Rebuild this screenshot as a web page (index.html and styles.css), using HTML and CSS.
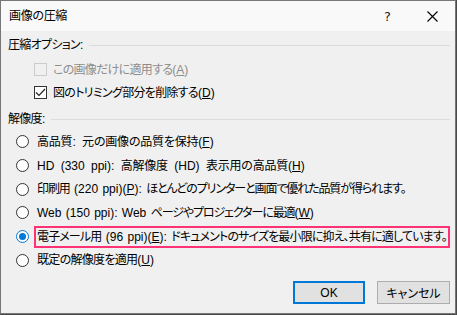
FILE: index.html
```html
<!DOCTYPE html>
<html lang="ja">
<head>
<meta charset="utf-8">
<title>画像の圧縮</title>
<link rel="stylesheet" href="styles.css">
</head>
<body>
<div class="window">
  <div class="titlebar">
    <span class="title">画像の圧縮</span>
    <span class="tb-btn help">?</span>
    <span class="tb-btn close">
      <svg width="11" height="11" viewBox="0 0 11 11"><path d="M0.5 0.5 L10.5 10.5 M10.5 0.5 L0.5 10.5" stroke="#000" stroke-width="1.1" fill="none"/></svg>
    </span>
  </div>
  <div class="content">
    <div class="group-head"><span>圧縮オプション<span class="lat">:</span></span><span class="rule"></span></div>
    <div class="checks">
      <div class="check-row disabled">
        <span class="box"></span>
        <span class="label">この画像だけに適用する<span class="lat">(<u>A</u>)</span></span>
      </div>
      <div class="check-row">
        <span class="box checked"><svg width="11" height="11" viewBox="0 0 11 11"><path d="M1 5.5 L4 8.5 L10 2" stroke="#222" stroke-width="1.2" fill="none"/></svg></span>
        <span class="label">図のトリミング部分を削除する<span class="lat">(<u>D</u>)</span></span>
      </div>
    </div>
    <div class="group-head second"><span>解像度<span class="lat">:</span></span><span class="rule"></span></div>
    <div class="radios">
      <div class="radio-row"><span class="radio"></span><span class="label loose">高品質<span class="lat">: </span>元の画像の品質を保持<span class="lat">(<u>F</u>)</span></span></div>
      <div class="radio-row"><span class="radio"></span><span class="label loose"><span class="lat">HD (330 ppi): </span>高解像度<span class="lat"> (HD) </span>表示用の高品質<span class="lat">(<u>H</u>)</span></span></div>
      <div class="radio-row"><span class="radio"></span><span class="label tight">印刷用<span class="lat"> (220 ppi)(<u>P</u>): </span>ほとんどのプリンターと画面で優れた品質が得られます。</span></div>
      <div class="radio-row"><span class="radio"></span><span class="label tight"><span class="lat">Web (150 ppi): Web </span>ページやプロジェクターに最適<span class="lat">(<u>W</u>)</span></span></div>
      <div class="radio-row"><span class="radio selected"></span><span class="label highlight">電子メール用<span class="lat"> (96 ppi)(<u>E</u>): </span>ドキュメントのサイズを最小限に抑え、共有に適しています。</span></div>
      <div class="radio-row"><span class="radio"></span><span class="label">既定の解像度を適用<span class="lat">(<u>U</u>)</span></span></div>
    </div>
    <div class="footer">
      <span class="btn default">OK</span>
      <span class="btn">キャンセル</span>
    </div>
  </div>
</div>
</body>
</html>
```
FILE: styles.css
```css
html, body {
  margin: 0;
  padding: 0;
  background: #4a4a4a;
}
body {
  width: 457px;
  height: 315px;
  overflow: hidden;
  font-family: "Liberation Sans", "Noto Sans CJK JP", sans-serif;
  font-size: 12px;
  font-feature-settings: "palt";
  letter-spacing: -0.7px;
  color: #000;
}
.lat {
  letter-spacing: 0;
  word-spacing: 1px;
}
.window {
  width: 456px;
  height: 314px;
  box-sizing: border-box;
  border: 1px solid #777;
  background: #f0f0f0;
  display: flex;
  flex-direction: column;
}
.titlebar {
  height: 30px;
  flex: none;
  background: #f9f9f9;
  display: flex;
  align-items: center;
  padding-left: 8px;
}
.title {
  flex: 1;
  line-height: 16px;
  letter-spacing: -0.3px;
  margin-top: -1px;
}
.tb-btn {
  width: 45px;
  height: 30px;
  display: flex;
  align-items: center;
  justify-content: center;
}
.help {
  font-family: "DejaVu Sans", sans-serif;
  font-size: 13px;
  color: #222;
  letter-spacing: 0;
}
.content {
  flex: 1;
  padding-left: 7px;
  padding-right: 5px;
  display: flex;
  flex-direction: column;
}
.group-head {
  margin-top: 6px;
  height: 16px;
  display: flex;
  align-items: center;
  line-height: 16px;
}
.group-head.second {
  margin-top: 10px;
}
.rule {
  flex: 1;
  height: 1px;
  background: #dcdcdc;
  margin-left: 6px;
}
.checks {
  margin-top: 8px;
  padding-left: 26px;
  display: flex;
  flex-direction: column;
  gap: 6px;
}
.check-row {
  height: 17px;
  display: flex;
  align-items: center;
}
.box {
  width: 13px;
  height: 13px;
  box-sizing: border-box;
  border: 1px solid #333;
  background: #fff;
  display: flex;
  align-items: center;
  justify-content: center;
  margin-right: 6px;
}
.check-row.disabled .box {
  border-color: #cccccc;
  background: #f0f0f0;
}
.check-row.disabled .label {
  color: #8d8d8d;
}
.radios {
  margin-top: 3px;
  padding-left: 8px;
  display: flex;
  flex-direction: column;
}
.radio-row {
  height: 23.7px;
  display: flex;
  align-items: center;
}
.radio {
  width: 13px;
  height: 13px;
  box-sizing: border-box;
  border: 1px solid #333;
  border-radius: 50%;
  background: #fff;
  margin-right: 8px;
  flex: none;
  display: flex;
  align-items: center;
  justify-content: center;
}
.radio.selected {
  border-color: #0078d7;
}
.radio.selected::after {
  content: "";
  width: 7px;
  height: 7px;
  border-radius: 50%;
  background: #0078d7;
}
.label {
  line-height: 16px;
  white-space: nowrap;
}
.loose {
  letter-spacing: -0.2px;
}
.loose .lat {
  word-spacing: 3px;
}
.tight {
  letter-spacing: -1.1px;
}
.highlight {
  margin-left: -3px;
  padding: 1px 1px 1px 1px;
  border: 2px solid #ff3276;
  letter-spacing: -0.85px;
}
.footer {
  margin-top: 9px;
  display: flex;
  justify-content: flex-end;
  gap: 12px;
}
.btn {
  width: 73px;
  height: 23px;
  box-sizing: border-box;
  border: 1px solid #adadad;
  background: #e1e1e1;
  display: flex;
  align-items: center;
  justify-content: center;
  letter-spacing: 0;
}
.btn.default {
  width: 72px;
  border: 2px solid #0078d7;
}
```
